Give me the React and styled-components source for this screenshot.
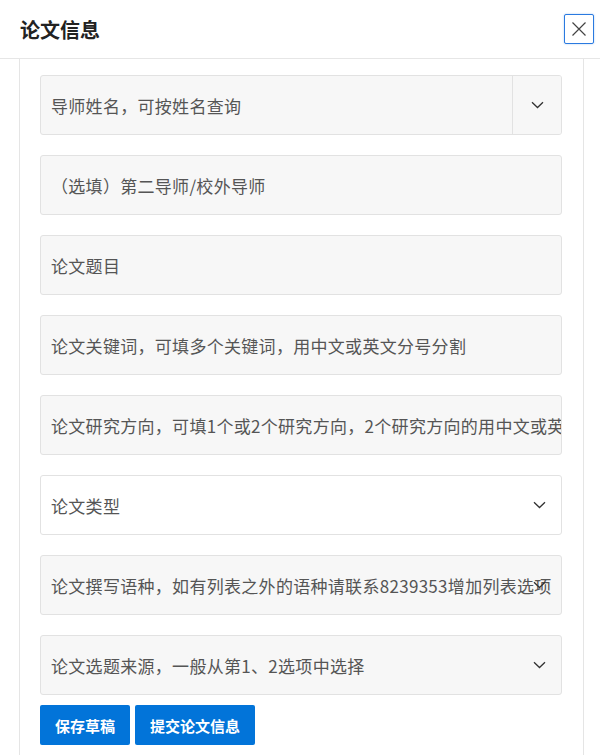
import React from 'react'
import styled, { createGlobalStyle } from 'styled-components'

const GlobalStyle = createGlobalStyle`
  body {
    margin: 0;
    background: #fff;
    font-family: "Noto Sans CJK SC", "Noto Sans", sans-serif;
  }
`

const Modal = styled.div`
  width: 600px;
  height: 755px;
  overflow: hidden;
  background: #fff;
`

const Header = styled.div`
  display: flex;
  align-items: center;
  justify-content: space-between;
  height: 58px;
  padding: 0 6px 0 20px;
  border-bottom: 1px solid #e6e6e6;

  & h3 {
    margin: 0;
    font-size: 20px;
    font-weight: 700;
    color: #222;
  }
`

const CloseButton = styled.button`
  display: flex;
  align-items: center;
  justify-content: center;
  width: 30px;
  height: 30px;
  padding: 0;
  background: #fff;
  border: 1px solid #2a7ae0;
  border-radius: 2px;
  box-shadow: 0 0 2px rgba(42, 122, 224, 0.4);
`

const Panel = styled.div`
  box-sizing: border-box;
  width: 565px;
  height: 700px;
  margin-left: 19px;
  padding: 16px 21px 0 20px;
  border-left: 1px solid #e5e5e5;
  border-right: 1px solid #e5e5e5;
  display: flex;
  flex-direction: column;
  gap: 20px;
`

const Field = styled.div`
  position: relative;
  box-sizing: border-box;
  display: flex;
  align-items: stretch;
  height: 60px;
  background: ${props => (props.white ? '#fff' : '#f7f7f7')};
  border: 1px solid #e2e2e2;
  border-radius: 3px;
  overflow: hidden;
`

const Text = styled.div`
  flex: 1;
  display: flex;
  align-items: center;
  padding-left: 10px;
  font-size: 17px;
  letter-spacing: 0.3px;
  color: #555;
  white-space: nowrap;
  overflow: hidden;
`

const Addon = styled.div`
  display: flex;
  align-items: center;
  justify-content: center;
  width: 48px;
  border-left: 1px solid #e2e2e2;
  background: #f7f7f7;
`

const Caret = styled.span`
  position: absolute;
  right: 15px;
  top: 50%;
  transform: translateY(-50%);
  display: flex;
`

const Actions = styled.div`
  display: flex;
  gap: 5px;
  margin-top: -10px;
`

const Button = styled.button`
  height: 40px;
  padding: 0 15px;
  border: none;
  border-radius: 2px;
  background: #0274d9;
  color: #fff;
  font-family: "Noto Sans CJK SC", sans-serif;
  font-size: 15px;
  font-weight: 700;
`

const Chevron = () => (
  <svg width="13" height="8" viewBox="0 0 13 8">
    <path d="M1 1.2l5.5 5.3L12 1.2" fill="none" stroke="#333" strokeWidth="1.3" />
  </svg>
)

const fields = [
  { text: '导师姓名，可按姓名查询', addon: true },
  { text: '（选填）第二导师/校外导师' },
  { text: '论文题目' },
  { text: '论文关键词，可填多个关键词，用中文或英文分号分割' },
  { text: '论文研究方向，可填1个或2个研究方向，2个研究方向的用中文或英文分号分割' },
  { text: '论文类型', select: true, white: true },
  { text: '论文撰写语种，如有列表之外的语种请联系8239353增加列表选项', select: true },
  { text: '论文选题来源，一般从第1、2选项中选择', select: true },
]

const App = () => (
  <Modal>
    <GlobalStyle />
    <Header>
      <h3>论文信息</h3>
      <CloseButton>
        <svg width="16" height="16" viewBox="0 0 16 16">
          <path d="M1.5 1.5l13 13M14.5 1.5l-13 13" stroke="#444" strokeWidth="1.2" />
        </svg>
      </CloseButton>
    </Header>
    <Panel>
      {fields.map((f, i) => (
        <Field key={i + '-field'} white={f.white}>
          <Text>{f.text}</Text>
          {f.addon && (
            <Addon>
              <Chevron />
            </Addon>
          )}
          {f.select && (
            <Caret>
              <Chevron />
            </Caret>
          )}
        </Field>
      ))}
      <Actions>
        <Button>保存草稿</Button>
        <Button>提交论文信息</Button>
      </Actions>
    </Panel>
  </Modal>
)

export default App
